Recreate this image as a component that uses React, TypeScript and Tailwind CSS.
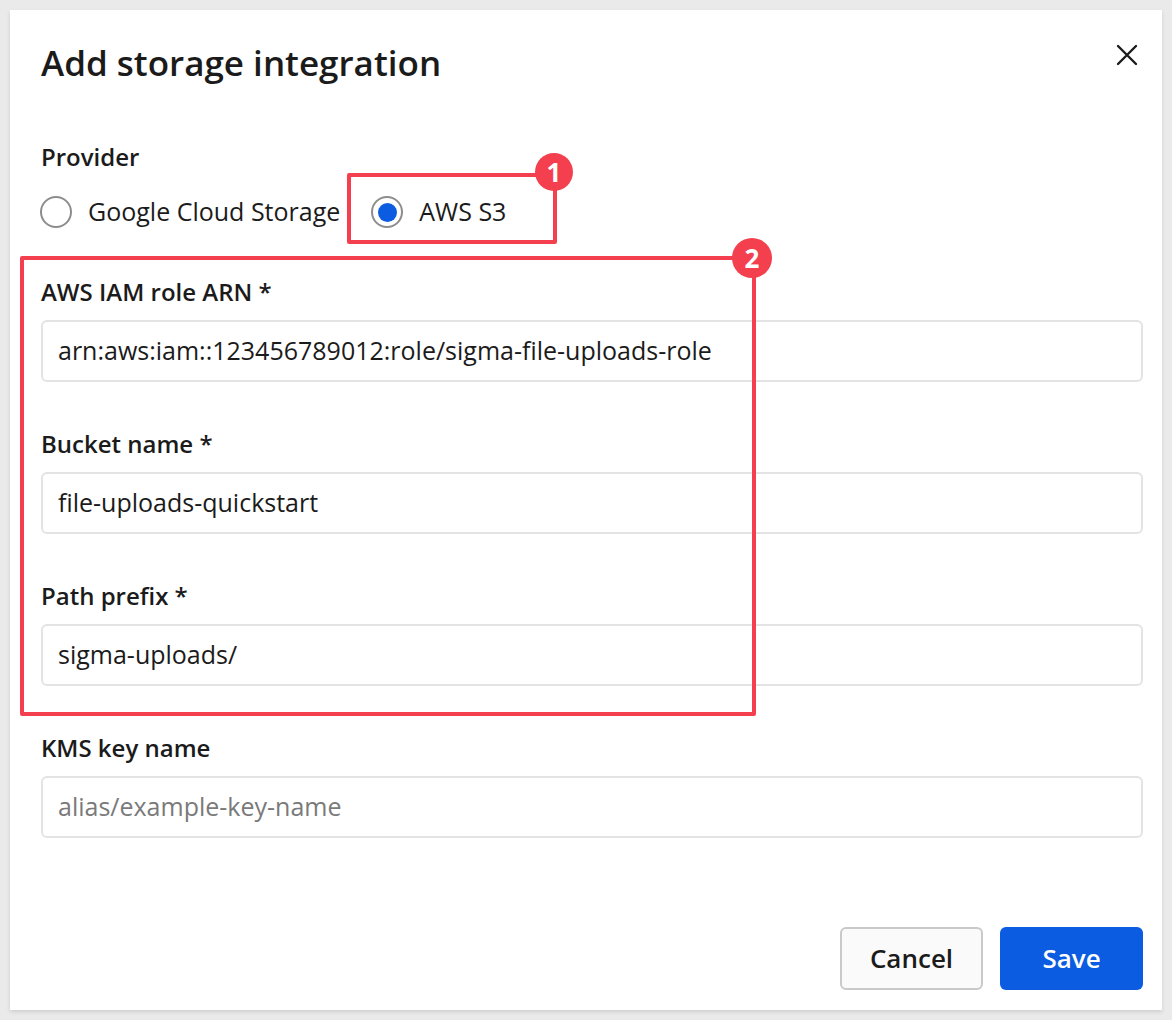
import React from 'react';

const fields = [
  { label: 'AWS IAM role ARN *', value: 'arn:aws:iam::123456789012:role/sigma-file-uploads-role' },
  { label: 'Bucket name *', value: 'file-uploads-quickstart' },
  { label: 'Path prefix *', value: 'sigma-uploads/' },
  { label: 'KMS key name', value: '', placeholder: 'alias/example-key-name' },
];

function Radio({ checked, label }: { checked?: boolean; label: string }) {
  return (
    <label className="flex items-center gap-4">
      <span className="w-8 h-8 rounded-full border-2 border-[#8d8d8d] flex items-center justify-center bg-white">
        {checked && <span className="w-[19px] h-[19px] rounded-full bg-[#0b5ce0]" />}
      </span>
      <span className="text-[25px] text-[#1b1b1b]">{label}</span>
    </label>
  );
}

export default function App() {
  return (
    <div className="min-h-screen bg-[#eaeaea] p-[10px] font-['Open_Sans',sans-serif]">
      <div className="relative bg-white w-[1152px] h-[1000px] shadow-[0_2px_4px_rgba(0,0,0,0.12)] flex flex-col pl-[31px] pr-[19px]">
        {/* Header */}
        <div className="h-[106px] flex items-center justify-between">
          <h1 className="text-[35px] font-semibold text-[#1b1b1b]">Add storage integration</h1>
          <button className="mb-4 mr-[5px] text-[#1b1b1b]" aria-label="Close">
            <svg width="22" height="22" viewBox="0 0 22 22" fill="none" stroke="currentColor" strokeWidth="2.4" strokeLinecap="round">
              <path d="M2 2 L20 20 M20 2 L2 20" />
            </svg>
          </button>
        </div>

        {/* Provider */}
        <div className="mt-[25px] h-8 flex items-center text-[24px] font-semibold text-[#1b1b1b]">Provider</div>
        <div className="mt-[19px] h-10 flex items-center gap-[31px] -ml-px">
          <Radio label="Google Cloud Storage" />
          <Radio checked label="AWS S3" />
        </div>

        {/* Fields */}
        <div className="mt-[44px] flex flex-col gap-[46px]">
          {fields.map((f) => (
            <div key={f.label} className="flex flex-col">
              <div className="h-8 flex items-center text-[24px] font-semibold text-[#1b1b1b]">{f.label}</div>
              <div className="mt-3 h-[62px] rounded-md border-2 border-[#e3e3e3] flex items-center px-[15px] text-[25px]">
                {f.value ? (
                  <span className="text-[#1b1b1b]">{f.value}</span>
                ) : (
                  <span className="text-[#7a7a7a]">{f.placeholder}</span>
                )}
              </div>
            </div>
          ))}
        </div>

        {/* Footer */}
        <div className="mt-auto pb-[20px] flex justify-end gap-[17px]">
          <button className="w-[143px] h-[63px] rounded-md border-2 border-[#c9c9c9] bg-[#fafafa] text-[26px] font-semibold text-[#1b1b1b]">
            Cancel
          </button>
          <button className="w-[143px] h-[63px] rounded-md bg-[#0b5ce0] text-[26px] font-semibold text-white">
            Save
          </button>
        </div>

        {/* Annotations */}
        <div className="absolute left-[337px] top-[163px] w-[210px] h-[71px] border-4 border-[#f43f4e] rounded-[2px]" />
        <div className="absolute left-[10px] top-[246px] w-[736px] h-[460px] border-4 border-[#f43f4e] rounded-[2px]" />
        <div className="absolute left-[525px] top-[143px] w-[38px] h-[38px] rounded-full bg-[#f43f4e] flex items-center justify-center text-white text-[26px] font-bold">
          1
        </div>
        <div className="absolute left-[722px] top-[228px] w-[40px] h-[40px] rounded-full bg-[#f43f4e] flex items-center justify-center text-white text-[26px] font-bold">
          2
        </div>
      </div>
    </div>
  );
}
